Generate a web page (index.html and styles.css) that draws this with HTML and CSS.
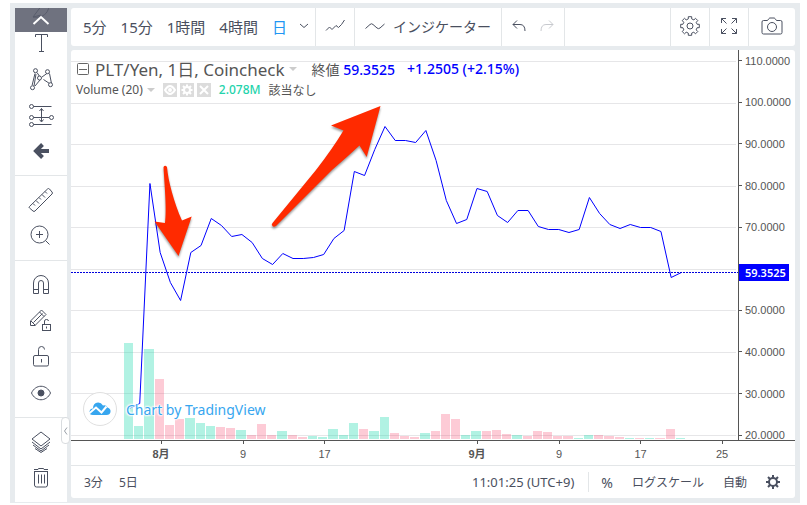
FILE: index.html
```html
<!DOCTYPE html>
<html lang="ja">
<head>
    <meta charset="utf-8">
    <title>PLT/Yen</title>
    <link rel="stylesheet" href="styles.css">
</head>
<body>
    <div class="widget">
        <aside class="sidebar">
            <div class="tools">
                <div class="tool-group">
                    <button class="tool" aria-label="ブラシ"><svg width="28" height="28" viewBox="0 0 28 28"><path d="M6 24L15 12c4-3 8 1 6 5-2 5-7 8-15 7zM6 24l8-2"/></svg></button>
                    <button class="tool" aria-label="テキスト"><svg width="28" height="28" viewBox="0 0 28 28"><path d="M8.500 8V5.500h12V8M14.500 5.500v17M12 22.500h5"/></svg></button>
                    <button class="tool" aria-label="パターン"><svg width="28" height="28" viewBox="0 0 28 28"><path d="M5.200 20L8 8.500M10 7.500l3 4.500M15 12l5.500-4M8 21l5-6M16.500 14.500l6 4M22.500 8.500l2 10M7 21l2-12"/><g class="node"><circle cx="8.500" cy="5.700" r="2"/><circle cx="20.500" cy="6.700" r="2"/><circle cx="12.500" cy="13" r="2"/><circle cx="5.500" cy="22.700" r="2"/><circle cx="23.500" cy="19.700" r="2"/></g></svg></button>
                    <button class="tool" aria-label="予測"><svg width="28" height="28" viewBox="0 0 28 28"><path d="M6 5.500h18.500M6 16.500h16M6 23.500h18.500M14.500 7.500v13M12.500 10l2-2.500 2 2.500M12.500 18.500l2 2.500 2-2.500"/><g class="node"><circle cx="4.500" cy="5.500" r="2"/><circle cx="4.500" cy="16.500" r="2"/><circle cx="24.500" cy="16.500" r="2"/><circle cx="4.500" cy="23.500" r="2"/></g></svg></button>
                    <button class="tool" aria-label="矢印"><svg width="28" height="28" viewBox="0 0 28 28"><path class="bold" d="M22 14H9M15.500 7.500L9 14l6.500 6.500"/></svg></button>
                </div>
                <div class="tool-group">
                    <button class="tool" aria-label="計測"><svg width="28" height="28" viewBox="0 0 28 28"><path d="M2.500 20.500L20.500 3q1-1 2 0l2.500 3q1 1 0 2L8 25q-1 1-2 0l-3.500-3q-1-.8 0-1.500zM6 17.500l2 2M9 14.500l3 3M12 11.500l2 2M15 8.500l3 3M18 5.500l2 2"/></svg></button>
                    <button class="tool" aria-label="ズーム"><svg width="28" height="28" viewBox="0 0 28 28"><circle cx="12.500" cy="12.500" r="8.500"/><path d="M12.500 9v7M9 12.500h7M18.500 18.500l4 4"/></svg></button>
                </div>
                <div class="tool-group">
                    <button class="tool" aria-label="マグネット"><svg width="28" height="28" viewBox="0 0 28 28"><path d="M6.500 22.500V12a7.500 7.500 0 0 1 15 0v10.500h-5V12a2.500 2.500 0 0 0-5 0v10.500zM6.500 18.500h5M16.500 18.500h5"/></svg></button>
                    <button class="tool" aria-label="描画モード"><svg width="28" height="28" viewBox="0 0 28 28"><path d="M3.500 18.500v-4.500l11-11 4.500 4.500-11 11zM12.500 5l4.500 4.500M4 14l4.500 4.500M6.500 15.500l9-9"/><rect x="15.500" y="17.500" width="8" height="6"/><path d="M17.500 17v-3q0-1.500 2-1.500t2 1.500M19.500 19.500v2"/></svg></button>
                    <button class="tool" aria-label="ロック"><svg width="28" height="28" viewBox="0 0 28 28"><rect x="6.500" y="12.500" width="15" height="10.500" rx="1.500"/><path d="M11.500 12V6.500q0-3 3-3t3 3M14.500 16v3.500"/></svg></button>
                    <button class="tool" aria-label="表示"><svg width="28" height="28" viewBox="0 0 28 28"><path d="M4.500 14c4-9 15-9 19 0-4 9-15 9-19 0z"/><circle class="solid" cx="14" cy="14" r="3"/></svg></button>
                </div>
                <div class="tool-group">
                    <button class="tool" aria-label="オブジェクト"><svg width="28" height="28" viewBox="0 0 28 28"><path d="M14 4l9 7-9 7-9-7zM5 14l9 7 9-7M6 17l8 6 8-6M8 20.500l6 4 6-4"/></svg></button>
                    <button class="tool" aria-label="削除"><svg width="28" height="28" viewBox="0 0 28 28"><path d="M7.500 8v13q0 2 2 2h9q2 0 2-2V8M7 7.500h14M7 5.500h4l.5-1h5l.5 1h4M11.500 10.500v9M14.500 10.500v9M17.500 10.500v9"/></svg></button>
                </div>
            </div>
            <button class="scroll-up" aria-label="上へ"><svg width="20" height="12" viewBox="0 0 20 12"><path d="M2.500 10L10 3l7.500 7"/></svg></button>
            <button class="collapse" aria-label="閉じる"><svg width="5" height="10" viewBox="0 0 5 10"><path d="M4 1.500L1.500 5 4 8.500"/></svg></button>
        </aside>

        <main class="main">
            <header class="toolbar">
                <div class="toolbar-group intervals">
                    <button>5分</button>
                    <button>15分</button>
                    <button>1時間</button>
                    <button>4時間</button>
                    <button class="active">日</button>
                    <button aria-label="その他の時間足"><svg width="10" height="6" viewBox="0 0 10 6"><path d="M1 1l4 3.500L9 1"/></svg></button>
                </div>
                <div class="toolbar-group">
                    <button aria-label="チャートタイプ"><svg width="20" height="14" viewBox="0 0 20 14"><path d="M1 11.500l3.500-3.500 2.500 2.500 4-4 2.500 2 3-3L19.500 1"/></svg></button>
                </div>
                <div class="toolbar-group indicators">
                    <button><svg width="20" height="10" viewBox="0 0 20 10"><path d="M.5 7.500l4.500-4q1.500-1.500 3 0l4 3.500q1.500 1.300 3 0l4.500-4"/></svg>インジケーター</button>
                </div>
                <div class="toolbar-group history">
                    <button aria-label="元に戻す"><svg width="14" height="12" viewBox="0 0 14 12"><path d="M5 .5l-4 4 4 4M1 4.500h7q5 0 5 6.500"/></svg></button>
                    <button aria-label="やり直す" disabled><svg width="14" height="12" viewBox="0 0 14 12"><path d="M9 .5l4 4-4 4M13 4.500H6q-5 0-5 6.500"/></svg></button>
                </div>
                <div class="toolbar-group push">
                    <button aria-label="設定"><svg width="20" height="20" viewBox="0 0 20 20"><circle cx="10" cy="10" r="3"/><path d="M8.300.7h3.400v2.200l2.200 1 1.600-1.600 2.300 2.300-1.600 1.700 1 2h2.100v3.400h-2.200l-.9 2.200 1.600 1.600-2.300 2.300-1.700-1.600-2.100.9v2.200H8.300v-2.200l-2.100-.9-1.700 1.600-2.300-2.300 1.600-1.600-.9-2.200H.7V8.300h2.200l.9-2-1.600-1.700 2.300-2.300 1.700 1.600 2.100-1z"/></svg></button>
                </div>
                <div class="toolbar-group">
                    <button aria-label="全画面"><svg width="20" height="18" viewBox="-1 0 20 18"><path d="M1.500 6V1.500H6M1.500 1.500l5 5M12 1.500h4.500V6M16.500 1.500l-5 5M1.500 12v4.500H6M1.500 16.500l5-5M12 16.500h4.500V12M16.500 16.500l-5-5"/></svg></button>
                </div>
                <div class="toolbar-group camera">
                    <button aria-label="スナップショット"><svg width="22" height="18" viewBox="0 0 22 18"><path d="M2.500 3.500h4L8 1.500q.5-.5 1-.5h4q.5 0 1 .5l1.500 2h4q1.500 0 1.500 1.500v10.500q0 1.500-1.500 1.500h-17Q1 17 1 15.500V5q0-1.500 1.500-1.500z"/><circle cx="11" cy="10" r="4.500"/></svg></button>
                </div>
            </header>

            <section class="chart">
                <div class="pane">
                    <div class="plot">
                        <svg id="plot" class="plot-svg" viewBox="0 0 667 390" preserveAspectRatio="none">
                            <g id="grid" class="grid"></g>
                            <polyline id="price-line" class="price-line"/>
                            <g id="volume"></g>
                            <path class="last-price" d="M0 222.500H667"/>
                            <g class="arrows">
                                <path d="M92.500 117q1.500-2.500 3.500 0c1 13 7 36 15 53.500l9.700-4L107.500 206 83.500 171.500l10.500 1.500c2-13-.5-38-1.500-56z"/>
                                <path d="M201.500 173L245 120Q262 98 272.500 80.500L260 75.500 309.500 56 295.700 107l-7.200-11.500Q275 108 261 120L205 176q-2.500 1.500-3.500 0-1.500-1.500 0-3z"/>
                            </g>
                        </svg>
                        <div class="legend">
                            <div class="legend-title">
                                <svg width="14" height="14" viewBox="0 0 14 14"><rect x="1.500" y="1.500" width="11" height="11" rx="1"/><path d="M3 7.500h8"/></svg>
                                <span class="symbol">PLT/Yen, 1日, Coincheck</span>
                                <i class="caret"></i>
                                <span class="close">終値 <b>59.3525</b></span>
                                <b>+1.2505 (+2.15%)</b>
                            </div>
                            <div class="legend-study">
                                <span>Volume (20)</span>
                                <i class="caret"></i>
                                <div class="study-buttons">
                                    <button aria-label="非表示"><svg width="14" height="14" viewBox="0 0 14 14"><path d="M2 7q5-8 10 0-5 8-10 0z"/><circle cx="7" cy="7" r="1"/></svg></button>
                                    <button aria-label="設定"><svg width="14" height="14" viewBox="0 0 14 14"><circle cx="7" cy="7" r="3"/><path d="M7 1.500V4M7 10v2.500M1.500 7H4M10 7h2.500M3 3l2 2M9 9l2 2M11 3L9 5M5 9l-2 2"/></svg></button>
                                    <button aria-label="削除"><svg width="14" height="14" viewBox="0 0 14 14"><path d="M3 3l8 8M11 3l-8 8"/></svg></button>
                                </div>
                                <span class="volume-value">2.078M</span>
                                <span>該当なし</span>
                            </div>
                        </div>
                        <a class="credit" href="#">
                            <span class="credit-logo"><svg width="22" height="14" viewBox="0 0 22 14"><path class="cloud" d="M4 13Q0 13 .5 9.500 1 6.500 4 6.500 4 1 9 .5q3-.2 5 3 3-1 4.500 2 3.500 1 3 4.500-.5 3-4 3z"/><path class="trend" d="M0 11.500L7 5.500l5.500 5 5-6"/></svg></span>
                            Chart by TradingView
                        </a>
                    </div>
                    <div class="price-axis">
                        <ul>
                            <li>110.0000</li>
                            <li>100.0000</li>
                            <li>90.0000</li>
                            <li>80.0000</li>
                            <li>70.0000</li>
                            <li></li>
                            <li>50.0000</li>
                            <li>40.0000</li>
                            <li>30.0000</li>
                            <li>20.0000</li>
                        </ul>
                        <div class="price-tag">59.3525</div>
                    </div>
                </div>
                <div class="time-axis">
                    <span></span>
                    <span class="tick"><b>8月</b></span>
                    <span class="tick">9</span>
                    <span class="tick">17</span>
                    <span></span>
                    <span class="tick"><b>9月</b></span>
                    <span class="tick">9</span>
                    <span class="tick">17</span>
                    <span class="tick">25</span>
                </div>
                <footer class="bottom-bar">
                    <button>3分</button>
                    <button>5日</button>
                    <button class="clock">11:01:25 (UTC+9)</button>
                    <div class="scale-options">
                        <button class="percent">%</button>
                        <button>ログスケール</button>
                        <button>自動</button>
                        <button aria-label="設定"><svg width="14" height="14" viewBox="0 0 14 14"><circle cx="7" cy="7" r="4"/><path d="M7 0v3M7 11v3M0 7h3M11 7h3M2 2l2 2M10 10l2 2M12 2l-2 2M4 10l-2 2"/></svg></button>
                    </div>
                </footer>
            </section>
        </main>
    </div>

    <script>
        const SVG_NS = 'http://www.w3.org/2000/svg';
        const STEP = 10.22;

        // closing price per day, as plot heights
        const closes = [
            358, 353, 133, 202, 232, 250, 202, 195, 168, 175, 186, 184, 192, 208, 214, 203,
            208, 208, 207, 204, 188, 180, 121, 125, 99, 76, 90, 90, 92, 80, 110, 150,
            173, 169, 138, 141, 165, 172, 160, 160, 176, 179, 179, 182, 179, 147, 163, 174,
            178, 174, 177, 177, 181, 227, 222
        ];

        // volume per day, u = up, d = down
        const volumes = (
            '96u 13u 90u 60d 14d 20d 21u 16u 13u 12d 11d 9u 4d 15d 4d 8u 4d 2d 3u 2u 10u 4u ' +
            '16u 10d 8u 22u 6d 3d 2d 6u 8d 25d 20d 4u 8u 8d 9d 5d 4u 3d 8d 7d 3d 3d 1u 4u ' +
            '4d 3d 2d 1u 1d 1u 1d 10d 1u'
        ).split(' ');

        function addShape(parentId, tag, attributes) {
            const shape = document.createElementNS(SVG_NS, tag);
            Object.entries(attributes).forEach(([key, value]) => shape.setAttribute(key, value));
            document.getElementById(parentId).appendChild(shape);
        }

        for (let i = 0; i < 10; i++) {
            const y = Math.round(11 + i * 41.55) + 0.5;
            addShape('grid', 'path', { d: `M0 ${y}H665` });
        }

        document.getElementById('price-line').setAttribute('points',
            closes.map((y, i) => `${58.5 + i * STEP},${y + 0.5}`).join(' '));

        volumes.forEach((item, i) => {
            const height = parseInt(item);
            const x = Math.round(53 + i * STEP);
            const next = Math.round(53 + (i + 1) * STEP);
            addShape('volume', 'rect', {
                class: item.endsWith('u') ? 'up' : 'down',
                x: x,
                y: 389 - height,
                width: next - x - 1,
                height: height
            });
        });
    </script>
</body>
</html>
```
FILE: styles.css
```css
* {
    box-sizing: border-box;
}

body {
    margin: 0;
    padding: 3px 7px 2px 10px;
    background: #fff;
    color: #4a4f5e;
    font-family: "Noto Sans", "Noto Sans CJK JP", sans-serif;
    font-size: 14px;
}

button {
    display: flex;
    align-items: center;
    justify-content: center;
    padding: 0;
    border: none;
    background: none;
    color: inherit;
    font: inherit;
    white-space: nowrap;
    cursor: pointer;
}

svg {
    display: block;
    flex: none;
    fill: none;
    stroke: #4a5060;
    stroke-width: 1;
}

.widget {
    display: flex;
    gap: 4px;
    height: calc(100vh - 5px);
    min-height: 400px;
    padding: 5px;
    background: #e7ebee;
}

/* drawing tools */
.sidebar {
    position: relative;
    width: 52px;
    flex: none;
    margin-bottom: -4px;
    background: #fff;
}

.tools {
    height: 100%;
    overflow: hidden;
}

.tool-group {
    padding: 6px 0;
    border-bottom: 1px solid #e3e6e8;
}

.tool-group:first-child {
    margin-top: -25px;
}

.tool-group:last-child {
    border-bottom: none;
}

.tool {
    width: 100%;
    height: 36px;
}

.node {
    fill: #fff;
}

.bold {
    stroke-width: 4;
}

.solid {
    fill: #4a5060;
}

.scroll-up {
    position: absolute;
    top: 0;
    left: 0;
    width: 100%;
    height: 24px;
    background: rgba(90, 93, 108, 0.87);
}

.scroll-up svg {
    stroke: #fff;
    stroke-width: 2;
}

.collapse {
    position: absolute;
    right: -3px;
    bottom: 58px;
    width: 9px;
    height: 27px;
    border: 1px solid #d9dcdf;
    border-radius: 4px;
    background: #fff;
}

.collapse svg {
    stroke: #9aa0a8;
}

.main {
    display: flex;
    flex: 1;
    flex-direction: column;
    gap: 4px;
    min-width: 0;
}

/* toolbar */
.toolbar {
    display: flex;
    height: 38px;
    border-radius: 3px;
    background: #fff;
}

.toolbar-group {
    display: flex;
    align-items: center;
    padding: 0 9px;
    border-right: 1px solid #e3e6e8;
}

.toolbar-group button {
    margin-bottom: 2px;
}

.intervals {
    gap: 14px;
    padding: 0 6px 0 12px;
    font-size: 15px;
}

.intervals .active {
    color: #2196f3;
}

.intervals .active + button {
    margin-left: -2px;
}

.indicators {
    padding: 0 10px;
}

.indicators button {
    gap: 8px;
}

.history {
    gap: 14px;
    padding: 0 10px;
}

.history button:disabled {
    opacity: 0.3;
}

.push {
    margin-left: auto;
    border-left: 1px solid #e3e6e8;
}

.camera {
    padding: 0 12px;
    border-right: none;
}

/* chart */
.chart {
    display: flex;
    flex: 1;
    flex-direction: column;
    min-height: 0;
    border-radius: 3px;
    background: #fff;
}

.pane {
    display: flex;
    flex: 1;
    min-height: 0;
    border-bottom: 1px solid #555;
}

.plot {
    position: relative;
    flex: 1;
    min-width: 0;
}

.plot-svg {
    width: 100%;
    height: 100%;
}

.grid {
    stroke: #e6e6e8;
}

.price-line {
    stroke: #00f;
}

.last-price {
    stroke: #00d;
    stroke-dasharray: 2 1;
}

.up,
.down {
    stroke: none;
    fill: rgba(38, 220, 178, 0.36);
}

.down {
    fill: rgba(247, 82, 119, 0.3);
}

.arrows {
    stroke: none;
    fill: #ff2a00;
    filter: drop-shadow(0 2px 1px rgba(0, 0, 0, 0.4));
}

.legend {
    position: absolute;
    top: 8px;
    left: 5px;
    color: #555;
    white-space: nowrap;
}

.legend b {
    color: #00f;
    font-weight: 500;
}

.legend-title,
.legend-study {
    display: flex;
    align-items: center;
    height: 21px;
}

.legend-title svg {
    stroke: #666;
}

.symbol {
    margin-left: 5px;
    font-size: 17px;
}

.caret {
    margin-left: 4px;
    border: 4px solid transparent;
    border-top-color: #ccc;
    border-bottom: none;
}

.close {
    margin: 0 12px 0 15px;
}

.legend-study {
    font-size: 12px;
}

.study-buttons {
    display: flex;
    gap: 3px;
    margin: 0 8px;
}

.study-buttons button {
    background: #dcdcdc;
}

.study-buttons svg {
    stroke: #fff;
    stroke-width: 2;
}

.volume-value {
    margin-right: 8px;
    color: #22d3ab;
    font-weight: 500;
}

.credit {
    position: absolute;
    bottom: 14px;
    left: 12px;
    display: flex;
    align-items: center;
    gap: 9px;
    color: #37a6ef;
    text-decoration: none;
    text-shadow: 0 0 2px #fff, 0 0 2px #fff, 0 0 2px #fff, 0 0 2px #fff, 0 0 3px #fff, 0 0 3px #fff;
    white-space: nowrap;
}

.credit-logo {
    display: flex;
    align-items: center;
    justify-content: center;
    width: 34px;
    height: 34px;
    border: 1px solid #e0e0e0;
    border-radius: 50%;
    background: #fff;
}

.credit-logo .cloud {
    stroke: none;
    fill: #37a6ef;
}

.credit-logo .trend {
    stroke: #fff;
    stroke-width: 2;
}

/* axes */
.price-axis,
.time-axis {
    color: #555;
    font-family: "Liberation Sans", "Noto Sans CJK JP", sans-serif;
    font-size: 11px;
}

.price-axis {
    position: relative;
    width: 57px;
    flex: none;
    overflow: hidden;
    border-left: 1px solid #555;
}

.price-axis ul {
    display: grid;
    grid-template-rows: repeat(10, 1fr);
    height: 416px;
    margin: -10px 0 0;
    padding: 0;
    list-style: none;
}

.price-axis li {
    display: flex;
    align-items: center;
    gap: 3px;
}

.price-axis li::before {
    width: 3px;
    height: 1px;
    background: #555;
    content: "";
}

.price-tag {
    position: absolute;
    top: 214px;
    left: -1px;
    width: 51px;
    padding-left: 7px;
    background: #00f;
    color: #fff;
    font-family: "Noto Sans", sans-serif;
    font-weight: 600;
    line-height: 17px;
}

.time-axis {
    display: grid;
    grid-template-columns: 49fr 82fr 82fr 81fr 71fr 82fr 82fr 81fr 82fr 32fr;
    height: 24px;
    text-align: center;
    line-height: 20px;
}

.tick::before {
    display: block;
    width: 1px;
    height: 3px;
    margin: 0 auto;
    background: #555;
    content: "";
}

/* bottom bar */
.bottom-bar {
    display: flex;
    align-items: center;
    gap: 16px;
    height: 33px;
    padding: 0 15px 0 13px;
    border-top: 1px solid #e3e6e8;
    font-size: 12px;
}

.clock {
    margin-left: auto;
    margin-right: -2px;
    font-size: 13px;
}

.scale-options {
    display: flex;
    align-items: center;
    gap: 19px;
    height: 20px;
    padding-left: 12px;
    border-left: 1px solid #e3e6e8;
}

.percent {
    font-size: 14px;
}

.bottom-bar svg {
    stroke-width: 2;
}
```
